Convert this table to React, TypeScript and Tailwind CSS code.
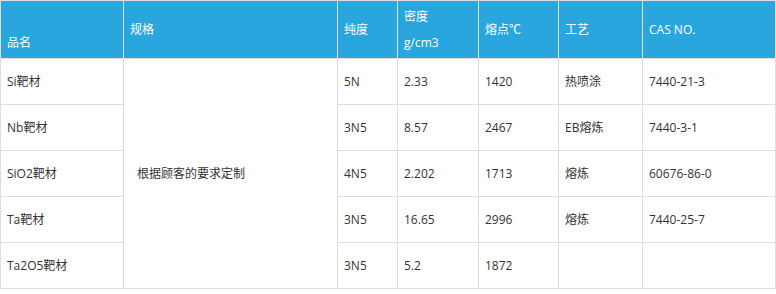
import React from "react";

const rows = [
  ["Si靶材", "5N", "2.33", "1420", "热喷涂", "7440-21-3"],
  ["Nb靶材", "3N5", "8.57", "2467", "EB熔炼", "7440-3-1"],
  ["SiO2靶材", "4N5", "2.202", "1713", "熔炼", "60676-86-0"],
  ["Ta靶材", "3N5", "16.65", "2996", "熔炼", "7440-25-7"],
  ["Ta2O5靶材", "3N5", "5.2", "1872", "", ""],
];

const font = { fontFamily: '"Open Sans", "Noto Sans CJK SC", sans-serif' };

export default function App() {
  const th = "border border-[#dddddd] px-[6px] text-left align-middle font-normal text-white text-[12px] leading-[26px]";
  const td = "border border-[#dddddd] px-[6px] text-left align-middle text-[#333333] text-[12px] leading-[20px] h-[46px]";
  const tdSpec = "border border-[#dddddd] pl-[13px] pr-[6px] text-left align-middle text-[#333333] text-[12px] leading-[20px]";
  return (
    <div className="w-[776px] h-[294px] bg-white" style={font}>
      <table className="w-[775px] table-fixed border-collapse">
        <colgroup>
          <col className="w-[123px]" />
          <col className="w-[214px]" />
          <col className="w-[60px]" />
          <col className="w-[81px]" />
          <col className="w-[80px]" />
          <col className="w-[84px]" />
          <col className="w-[133px]" />
        </colgroup>
        <thead>
          <tr className="h-[58px] bg-[#2aa6de]">
            <th className={th}>
              <br />品名
            </th>
            <th className={th}>规格</th>
            <th className={th}>纯度</th>
            <th className={th}>
              密度
              <br />
              g/cm3
            </th>
            <th className={th}>熔点℃</th>
            <th className={th}>工艺</th>
            <th className={th}>CAS NO.</th>
          </tr>
        </thead>
        <tbody>
          {rows.map((r, i) => (
            <tr key={i}>
              <td className={td}>{r[0]}</td>
              {i === 0 && (
                <td className={tdSpec} rowSpan={5}>
                  根据顾客的要求定制
                </td>
              )}
              <td className={td}>{r[1]}</td>
              <td className={td}>{r[2]}</td>
              <td className={td}>{r[3]}</td>
              <td className={td}>{r[4]}</td>
              <td className={td}>{r[5]}</td>
            </tr>
          ))}
        </tbody>
      </table>
    </div>
  );
}
